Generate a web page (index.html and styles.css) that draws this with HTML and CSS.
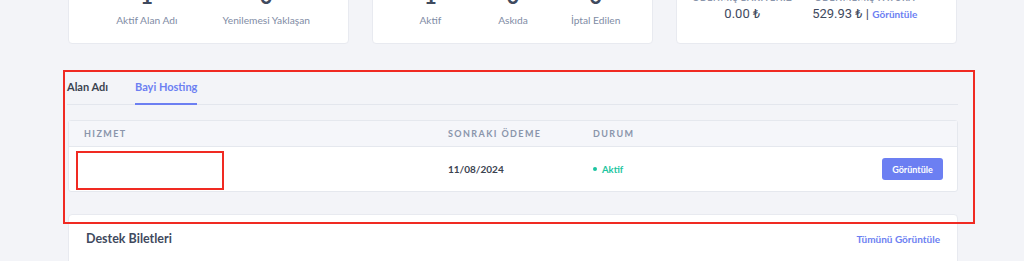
FILE: index.html
```html
<!DOCTYPE html>
<html lang="tr">
<head>
    <meta charset="UTF-8">
    <meta name="viewport" content="width=device-width, initial-scale=1.0">
    <title>Müşteri Paneli</title>
    <link rel="stylesheet" href="styles.css">
</head>
<body>
    <div class="page">
        <div class="stats">
            <div class="stat-card">
                <div class="stat">
                    <div class="stat-num">1</div>
                    <div class="stat-label">Aktif Alan Adı</div>
                </div>
                <div class="stat">
                    <div class="stat-num">0</div>
                    <div class="stat-label">Yenilemesi Yaklaşan</div>
                </div>
            </div>
            <div class="stat-card three">
                <div class="stat">
                    <div class="stat-num">1</div>
                    <div class="stat-label">Aktif</div>
                </div>
                <div class="stat">
                    <div class="stat-num">0</div>
                    <div class="stat-label">Askıda</div>
                </div>
                <div class="stat">
                    <div class="stat-num">0</div>
                    <div class="stat-label">İptal Edilen</div>
                </div>
            </div>
            <div class="stat-card money">
                <div class="stat">
                    <div class="money-label">ÖDENMİŞ BAKİYENİZ</div>
                    <div class="money-value">0.00 ₺</div>
                </div>
                <div class="stat">
                    <div class="money-label">ÖDENMEMİŞ FATURA</div>
                    <div class="money-value">529.93 ₺ | <a href="#">Görüntüle</a></div>
                </div>
            </div>
        </div>

        <div class="services">
            <div class="tabs">
                <a href="#" class="tab">Alan Adı</a>
                <a href="#" class="tab active">Bayi Hosting</a>
            </div>

            <div class="table">
                <div class="table-head">
                    <span>HIZMET</span>
                    <span>SONRAKI ÖDEME</span>
                    <span>DURUM</span>
                    <span></span>
                </div>
                <div class="table-row">
                    <span></span>
                    <span class="date">11/08/2024</span>
                    <span class="status"><i class="dot"></i>Aktif</span>
                    <button>Görüntüle</button>
                </div>
            </div>

            <div class="mark mark-outer"></div>
            <div class="mark mark-inner"></div>
        </div>

        <div class="card tickets">
            <h3>Destek Biletleri</h3>
            <a href="#">Tümünü Görüntüle</a>
        </div>
    </div>
</body>
</html>
```

FILE: styles.css
```css
body {
    margin: 0;
    background-color: #f3f4f8;
    font-family: 'Lato', sans-serif;
    color: #3f4a5e;
    overflow: hidden;
}
a {
    text-decoration: none;
}
.page {
    width: 890px;
    margin-left: 68px;
}
.stats {
    display: grid;
    grid-template-columns: repeat(3, 281px);
    column-gap: 23px;
    margin-top: -46px;
}
.stat-card {
    height: 90px;
    box-sizing: border-box;
    background-color: #fff;
    border: 1px solid #e8eaf0;
    border-radius: 4px;
    display: grid;
    grid-template-columns: 1fr 1fr;
    padding: 28px 22px 0 18px;
}
.stat-card.three {
    grid-template-columns: 1fr 1fr 1fr;
    padding: 28px 15px 0 16px;
}
.stat {
    text-align: center;
}
.stat-num {
    font-size: 22px;
    line-height: 26px;
    font-weight: 700;
    color: #3f4a5e;
}
.stat-label {
    margin-top: 4px;
    font-size: 10.2px;
    line-height: 14px;
    color: #7f8ca5;
}
.stat-card.money {
    padding: 37px 30px 0 4px;
}
.money-label {
    font-size: 9px;
    line-height: 12px;
    letter-spacing: 0.5px;
    font-weight: 700;
    color: #8a95ab;
}
.money-value {
    margin-top: 1px;
    font-family: 'Roboto', sans-serif;
    font-size: 13px;
    line-height: 18px;
    color: #3f4a5e;
}
.money-value a {
    color: #6c7ff2;
    font-family: 'Lato', sans-serif;
    font-weight: 700;
    font-size: 10px;
}
.services {
    position: relative;
    margin-top: 26px;
}
.tabs {
    display: flex;
    gap: 27px;
    border-bottom: 1px solid #e3e6ed;
    margin-left: -1px;
}
.tab {
    padding: 10px 0 9px;
    font-size: 11px;
    line-height: 14px;
    font-weight: 700;
    color: #3b4350;
    border-bottom: 2px solid transparent;
    margin-bottom: -1px;
}
.tab.active {
    color: #6c7ff2;
    border-bottom-color: #6c7ff2;
}
.table {
    margin-top: 15px;
    border: 1px solid #e5e8ee;
    border-radius: 3px;
    background-color: #fff;
}
.table-head,
.table-row {
    display: grid;
    grid-template-columns: 364px 145px 1fr auto;
    align-items: center;
    padding: 0 14px 0 15px;
}
.table-head {
    height: 25px;
    background-color: #f5f6fa;
    border-bottom: 1px solid #e5e8ee;
    font-size: 9px;
    font-weight: 700;
    letter-spacing: 1.4px;
    color: #8a95ab;
}
.table-row {
    height: 44px;
}
.date {
    font-size: 10px;
    font-weight: 700;
    color: #3b4350;
}
.status {
    font-size: 9.5px;
    font-weight: 700;
    color: #1bc5a0;
}
.dot {
    display: inline-block;
    width: 4px;
    height: 4px;
    border-radius: 50%;
    background-color: #1bc5a0;
    margin-right: 5px;
    vertical-align: 2px;
}
button {
    width: 61px;
    height: 22px;
    padding: 0;
    background-color: #6c7ff2;
    color: #fff;
    border: none;
    border-radius: 3px;
    font-family: 'Lato', sans-serif;
    font-size: 9px;
    font-weight: 700;
    cursor: pointer;
}
.mark {
    position: absolute;
    border: 2px solid #f02a22;
    box-sizing: border-box;
}
.mark-outer {
    left: -5px;
    top: 0;
    width: 912px;
    height: 154px;
}
.mark-inner {
    left: 8px;
    top: 81px;
    width: 148px;
    height: 39px;
}
.card {
    background-color: #fff;
    border: 1px solid #e8eaf0;
    border-radius: 4px;
}
.tickets {
    margin-top: 22px;
    height: 80px;
    display: flex;
    justify-content: space-between;
    align-items: flex-start;
    padding: 16px 17px 0 17px;
}
.tickets h3 {
    margin: 0;
    font-size: 12.5px;
    line-height: 16px;
    font-weight: 700;
    color: #3f4a5e;
}
.tickets a {
    font-size: 10px;
    line-height: 16px;
    font-weight: 700;
    color: #6c7ff2;
}
```
